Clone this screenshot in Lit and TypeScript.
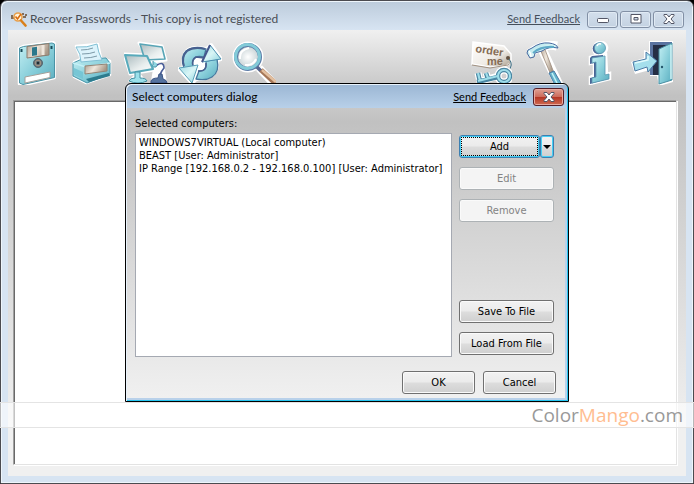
import { LitElement, html, css, svg } from "lit";
import { customElement } from "lit/decorators.js";

const logo = html`<svg class="logo" viewBox="0 0 16 16" aria-hidden="true">
  <path d="M0 5h2M11 3h2M14 4h2M0 7h3M12 6h3" stroke="#6b4a2c" stroke-width="1.5"/>
  <circle cx="7" cy="6" r="4" fill="#fff3dc" stroke="#e8a04c" stroke-width="1.600"/>
  <path d="M4.500 5.500l2 2.500 3.500-5" fill="none" stroke="#d86c10" stroke-width="1.600"/>
  <path d="M10 9.500l4.500 5" stroke="#d9801c" stroke-width="2.600" stroke-linecap="round"/>
</svg>`;

const icons = {
  save: svg`
    <path d="M3 7l4-2 30-4 1.500 1v35L8 44l-5-1z" fill="#fff" stroke="#fff" stroke-width="2.500" stroke-linejoin="round"/>
    <path d="M3.500 7l4-1.500L36 2l2.500 1v33.500L7 43.500l-3.500-1.500z" fill="url(#aqua)" stroke="#4a93a6" stroke-linejoin="round"/>
    <path d="M11 5.500L33 2.500V14L11 17z" fill="url(#tan)" stroke="#8d7c6e"/>
    <path d="M16 6.500l5-.7v8.500l-5 .7z" fill="#2b788c"/>
    <path d="M27 4v10" stroke="#efe6dc" stroke-width="3"/>
    <circle cx="22" cy="22" r="4.500" fill="#65727a" stroke="#55666e"/>
    <circle cx="22" cy="22" r="2.800" fill="none" stroke="#a89683"/>
    <circle cx="22" cy="22" r="1.200" fill="#1e2b30"/>
    <path d="M9 36l25-5v5.500L9 42z" fill="#fff" stroke="#a5a09a"/>
    <path d="M5.500 8v3M35.500 5v3" stroke="#174a58" stroke-width="2"/>`,
  print: svg`
    <path d="M6 5l22-2 3 14 9 3v14l-24 8-12-6V21l7-3z" fill="#fff" stroke="#fff" stroke-width="2.500" stroke-linejoin="round"/>
    <path d="M3 22l9-4 24-1 4 5v11L17 42 3 35z" fill="url(#aqua)" stroke="#4593a8" stroke-linejoin="round"/>
    <path d="M6 6q11 1 21-3 1 8 5 16l-21 2Q11 13 6 6z" fill="#dcf3fb" stroke="#7fbfd4"/>
    <path d="M11 9q7 0 12-2M12 13q8 0 13-2M14 17q7 0 13-2" fill="none" stroke="#7d9aa8"/>
    <path d="M3 22l13 4 24-4" fill="none" stroke="#c4f0f6" stroke-width="1.500"/>
    <path d="M15 25l22-2v7l-22 3z" fill="url(#tan)" stroke="#948475"/>
    <path d="M4 27l9 4v7l-9-4z" fill="#77c6d5"/>
    <path d="M16 38l23-6 1 3-21 6z" fill="#2d7c8e"/>`,
  computers: svg`
    <path d="M15 2l23 3 4 14-13 2-6-5zM0 13l24 1 6 15-24 4zM6 40h14l-6-8zM27 40h14l-2-15-9-3" fill="#fff" stroke="#fff" stroke-width="3" stroke-linejoin="round"/>
    <path d="M16 3l22 3 3 12-20 1z" fill="url(#screen)" stroke="#58a5b6" stroke-width="1.600" stroke-linejoin="round"/>
    <path d="M29 20v4l-3 2h6l2-3" fill="#8fd5e1" stroke="#4b93a5"/>
    <path d="M33 24q7-4 7 3-5 6-4 11" fill="none" stroke="#4b5f98" stroke-width="1.600"/>
    <path d="M27 40q1-3 7-3l1-4h3l1 5q4 1 4 4H27z" fill="#55739f" stroke="#3d5585"/>
    <path d="M1 14l22 1 6 13-23 4z" fill="url(#screen)" stroke="#58aabb" stroke-width="2" stroke-linejoin="round"/>
    <path d="M11 31h5v6q6 0 7 3-9 4-18 0 1-3 6-3z" fill="#9be0ea" stroke="#438fa2"/>`,
  refresh: svg`
    <g stroke-linejoin="round">
      <g fill="#fff" stroke="#fff" stroke-width="4">
        <path d="M6 27Q3 7 18 7l11 1L33 4l10 14-4 1q2 19-21 19l-4 4L1 28z"/>
      </g>
      <path d="M39 18q3 13-5 18-6 4-16 2l3-8q8 1 7-10z" fill="url(#aqua)" stroke="#47779d" stroke-width="1.300"/>
      <path d="M6 27Q2 16 8 10q7-5 20-2l-2 8q-8-2-10 2-2 3-1 8z" fill="url(#aqua)" stroke="#47779d" stroke-width="1.300"/>
      <path d="M6 25Q3 16 9 10q7-5 18-2" fill="none" stroke="#48608f" stroke-width="2"/>
      <path d="M15 25q-2-6 3-9l8 1" fill="none" stroke="#48608f" stroke-width="1.500"/>
      <path d="M20 30q9 1 8-8" fill="none" stroke="#48608f" stroke-width="1.500"/>
      <path d="M32 4l-8 17 19-3z" fill="url(#pale)" stroke="#4a8fb0"/>
      <path d="M32 4l-8 17" stroke="#45568c" stroke-width="2"/>
      <path d="M1 27l19-3-6 18z" fill="url(#pale)" stroke="#5a9fb8"/>
    </g>`,
  search: svg`
    <path d="M27 27l16 17" stroke="#fff" stroke-width="8"/>
    <circle cx="16" cy="16" r="15.500" fill="#fff"/>
    <circle cx="16" cy="16" r="12" fill="url(#glass)" stroke="#5b7aa6" stroke-width="4"/>
    <circle cx="15.500" cy="15.500" r="12" fill="none" stroke="#83cbd8" stroke-width="3"/>
    <path d="M8 18q-1-9 9-11M13 24q8 1 11-6" fill="none" stroke="#fff" stroke-width="2"/>
    <path d="M25 26l4 4" stroke="#55668f" stroke-width="3.500"/>
    <path d="M29 29l15 14" stroke="#a57758" stroke-width="5"/>
    <path d="M30 29l14 12" stroke="#e3c0a0" stroke-width="2.500"/>`,
  order: svg`
    <path d="M5 1l31 4 7 8v8l-5 4-16 1-18-3z" fill="url(#paper)" stroke="#fff" stroke-width="1.500"/>
    <path d="M4 24l18 3 18-3 3-4" fill="none" stroke="#a09080"/>
    <circle cx="40" cy="17" r="2" fill="#63503f"/>
    <text class="tag" x="7" y="11" transform="rotate(9 7 11)">order</text>
    <text class="tag" x="19" y="24">me</text>
    <path d="M41 18q5 6-1 12" fill="none" stroke="#3e7188"/>
    <g fill="none">
      <g stroke="#fff" stroke-width="7"><path d="M30 35l-20 6M10 32l2 9M18 32l2 6"/><circle cx="36" cy="35" r="6"/></g>
      <g stroke="#4a86a3" stroke-width="4.500"><path d="M30 36l-21 5M10 32l2 9M18 32l2 6"/><circle cx="36" cy="35" r="6"/></g>
      <g stroke="#9edde9" stroke-width="2.200"><path d="M30 35l-20 5M10 32l2 8M18 32l2 5"/><circle cx="36" cy="35" r="6"/></g>
    </g>`,
  tools: svg`
    <path d="M20 8l17 36M8 12q13-10 27-7" fill="none" stroke="#fff" stroke-width="9"/>
    <path d="M18 8l4-2 10 26-3 2z" fill="url(#tan)" stroke="#9a8878" stroke-width=".8"/>
    <path d="M27 32l5-2 8 14h-7z" fill="#64b4cc" stroke="#4a78a3"/>
    <path d="M30 32l6 12" stroke="#c5f1f6" stroke-width="1.500"/>
    <path d="M6 9l4-2Q18 1 27 2q8 1 9 5-9-2-16 3l-7 2-1 4-4 1-3-5z" fill="url(#pale)" stroke="#4869a0" stroke-linejoin="round"/>
    <path d="M11 12q8-7 21-6" fill="none" stroke="#5eaac8" stroke-width="2"/>
    <path d="M7 10q2 2 2 6" fill="none" stroke="#fff" stroke-width="1.500"/>`,
  info: svg`
    <path d="M24 1a6 6 0 0 1 2 12h4l1 20 3-1v6L14 43v-7l4-2V22l-4 1v-7l7-2a7 7 0 0 1 3-13z" fill="#fff" stroke="#fff" stroke-width="2.500"/>
    <circle cx="22.500" cy="7.500" r="5.800" fill="#4a6596"/>
    <circle cx="24" cy="7" r="5.500" fill="url(#aqua)" stroke="#5896b0" stroke-width=".8"/>
    <path d="M14 17l2-2 11-1v22l5-1v3L14 43v-6l4-1V22l-4 1z" fill="#4a6596"/>
    <path d="M16 17l13-2v19l4-1v5l-17 4v-5l4-1V21l-4 1z" fill="url(#aqua)" stroke="#5896b0" stroke-width=".8"/>
    <path d="M21 5q1-3 4-2" fill="none" stroke="#fff" stroke-width="1.500"/>`,
  exit: svg`
    <path d="M19 0h24v41l-14 4-2-10h-7v-6l-15 4-4-12 13-4V9l5 2z" fill="#fff"/>
    <path d="M20 1h22v33H20z" fill="#5a73a0"/>
    <path d="M23 4h17v30H23z" fill="#252e45"/>
    <path d="M29 8l13-6v37l-13 4z" fill="url(#aqua)" stroke="#4a8fa3"/>
    <path d="M41 4v34" stroke="#d3f5f7" stroke-width="1.500"/>
    <circle cx="32" cy="26" r="1.200" fill="#24586c"/>
    <path d="M3 21l13-3v-7l11 9-9 11-1-5-12 4z" fill="#a5dfec" stroke="#4b79a5" stroke-linejoin="round"/>
    <path d="M5 22l13-3v-4" fill="none" stroke="#e2fbfd" stroke-width="1.500"/>`,
};

const paints = html`<svg class="paints" aria-hidden="true"><defs>
  <linearGradient id="aqua" x2="1" y2="1"><stop stop-color="#c5f0f4"/><stop offset=".5" stop-color="#8bd0db"/><stop offset="1" stop-color="#58adbf"/></linearGradient>
  <linearGradient id="pale" x2="1" y2="1"><stop stop-color="#9edbe5"/><stop offset=".5" stop-color="#d9f5f6"/><stop offset="1" stop-color="#8fd4df"/></linearGradient>
  <linearGradient id="tan" x2="1" y2=".3"><stop stop-color="#b0a193"/><stop offset=".5" stop-color="#efe7dc"/><stop offset="1" stop-color="#a89888"/></linearGradient>
  <linearGradient id="screen" x2="1" y2="1"><stop stop-color="#a9b9bd"/><stop offset=".6" stop-color="#e8eeee"/><stop offset="1" stop-color="#fff"/></linearGradient>
  <linearGradient id="paper" x2="1" y2="1"><stop stop-color="#fff"/><stop offset=".6" stop-color="#efebe5"/><stop offset="1" stop-color="#a89c8c"/></linearGradient>
  <radialGradient id="glass"><stop stop-color="#fff"/><stop offset="1" stop-color="#c3cfd2"/></radialGradient>
</defs></svg>`;

const cross = html`<svg class="glyph" viewBox="0 0 12 10" aria-hidden="true">
  <path class="mark" d="M1 .5h3L6 3 8 .5h3v1L8 5l3 3.500v1H8L6 7 4 9.500H1v-1L4 5 1 1.500z"/>
</svg>`;

@customElement("app-root")
export class AppRoot extends LitElement {
  static styles = css`
    :host { display: block; background: #000; font: 11px/13px "DejaVu Sans Condensed", "DejaVu Sans", sans-serif; color: #000; }
    * { box-sizing: border-box; }
    button, select { font: inherit; color: inherit; }
    .paints { position: absolute; width: 0; height: 0; }
    .desk { position: relative; min-height: 100vh; display: flex; }
    .window {
      flex: 1; display: flex; flex-direction: column; padding: 0 7px 7px;
      border: 1px solid #4b4b50; border-radius: 7px 7px 0 0;
      background: linear-gradient(#bccbdb, #d7e4f2 29px); box-shadow: inset 1px 1px #eef5fb, inset -1px -1px #eef5fb;
    }
    .bar { display: flex; align-items: center; }
    .window > .bar { height: 29px; padding: 7px 2px 0 3px; }
    h1, h2 { flex: 1; margin: 0; font: 12px/16px Lato, "Open Sans", sans-serif; }
    h1 { color: #494e55; }
    .logo { width: 16px; height: 16px; margin-right: 3px; }
    a { color: inherit; font: 11px/14px Lato, "Open Sans", sans-serif; margin-right: 7px; }
    .window > .bar a { color: #454f5b; }
    .ctl { width: 31px; height: 17px; padding: 0; display: grid; place-items: center; border: 1px solid #8290a5; border-radius: 3px; background: linear-gradient(#d3dfec, #c4d2e2); box-shadow: inset 0 0 0 1px #e0eaf4; }
    .controls { display: flex; gap: 2px; }
    .glyph { width: 12px; height: 10px; display: block; }
    .mark { fill: #fff; stroke: #535666; stroke-width: 1; }
    .close { height: 18px; border-color: #56202a; background: linear-gradient(#dfa093, #cd6c5c 48%, #b53625 52%, #cf6b52); box-shadow: inset 0 0 0 1px #e8aaa0; }
    .content { flex: 1; display: flex; flex-direction: column; padding: 0 9px 11px 5px; background: linear-gradient(#f0f0f0, #c1c1c1 66px, #c5c5c5 100px, #f0f0f0 400px); }
    .toolbar { display: flex; justify-content: space-between; padding: 11px 3px 15px 3px; }
    .group { display: flex; gap: 10px; }
    .tool { padding: 0; border: 0; background: none; }
    .tool svg { display: block; width: 44px; height: 44px; }
    .tag { font: bold 11px "Liberation Sans", sans-serif; fill: #856c54; }
    .results { flex: 1; background: #fff; border: 1px solid; border-color: #9d9d9d #e3e3e3 #e3e3e3 #a0a0a0; box-shadow: inset 1px 1px #696969, 1px 1px #fff; }
    .watermark { position: absolute; left: 0; right: 0; bottom: 56px; height: 26px; padding: 0 11px; border: solid #e4e4e4; border-width: 1px 0; background: rgb(255 255 255 / 60%); text-align: right; font: 19px/24px "Open Sans", "Noto Sans", sans-serif; color: #999; }
    .mango { color: #ffbd91; }
    .dialog {
      position: absolute; top: 83px; left: 0; right: 0; margin: 0 auto; width: 444px; max-width: 100%;
      border: 1px solid #000; border-radius: 6px 6px 0 0;
      background: linear-gradient(#9bb6d3, #b9d1ea 25px); box-shadow: inset 1px 1px #e8f2fb, inset -1px -1px #25c5f0; padding: 1px 3px 3px 1px;
    }
    .dialog .bar { height: 23px; padding: 0 1px 0 5px; }
    .body { background: linear-gradient(#c8c8c8, #c1c1c1 14px, #c4c4c4 30px, #f0f0f0); padding: 9px 11px 4px 8px; }
    .label { display: block; margin-bottom: 3px; }
    .columns { display: flex; gap: 7px; }
    .list { flex: 1; min-width: 0; height: 224px; padding: 2px 1px; margin: 0; border: 1px solid #a5a9b2; border-radius: 0; background: #fff; overflow: hidden; outline: none; }
    .list option { padding: 0 2px; min-height: 13px; line-height: 13px; }
    .side { width: 95px; display: flex; flex-direction: column; gap: 9px; padding: 2px 0; }
    .btn { height: 23px; padding: 0; border: 1px solid #707070; border-radius: 3px; background: linear-gradient(#f2f2f2, #ebebeb 48%, #dddddd 52%, #cfcfcf); box-shadow: inset 0 0 0 1px #fafafa; }
    .btn:disabled { color: #838383; border-color: #adb2b5; background: #f4f4f4; }
    .split { display: flex; }
    .split .btn { border-color: #3c7fb1; box-shadow: inset 0 0 0 1px #45d0f5; }
    .add { flex: 1; position: relative; }
    .add::after { content: ""; position: absolute; inset: 1px; border: 1px dotted #000; }
    .more { width: 14px; display: grid; place-items: center; }
    .arrow { border: solid transparent; border-width: 4px 4px 0; border-top-color: #000; }
    .push { margin-top: auto; }
    .footer { display: flex; justify-content: flex-end; gap: 8px; padding-top: 14px; margin-right: -2px; }
    .footer .btn { width: 73px; }
  `;

  private tool(name: keyof typeof icons, label: string) {
    return html`<button class="tool" aria-label=${label}>
      <svg viewBox="0 0 44 44" aria-hidden="true">${icons[name]}</svg>
    </button>`;
  }

  render() {
    return html`<div class="desk">
      ${paints}
      <main class="window">
        <header class="bar">
          ${logo}
          <h1>Recover Passwords - This copy is not registered</h1>
          <a href="#">Send Feedback</a>
          <div class="controls">
            <button class="ctl" aria-label="Minimize"><svg class="glyph" viewBox="0 0 12 10"><rect class="mark" x=".5" y="4.500" width="11" height="4" rx="1"/></svg></button>
            <button class="ctl" aria-label="Maximize"><svg class="glyph" viewBox="0 0 12 10"><path class="mark" fill-rule="evenodd" d="M1 .5h10v8.500H1zM4 3.500v2.500h4V3.500z"/></svg></button>
            <button class="ctl" aria-label="Close">${cross}</button>
          </div>
        </header>
        <div class="content">
          <nav class="toolbar">
            <div class="group">
              ${this.tool("save", "Save")}${this.tool("print", "Print")}${this.tool("computers", "Select computers")}${this.tool("refresh", "Refresh")}${this.tool("search", "Search")}
            </div>
            <div class="group">
              ${this.tool("order", "Order")}${this.tool("tools", "Tools")}${this.tool("info", "About")}${this.tool("exit", "Exit")}
            </div>
          </nav>
          <section class="results" aria-label="Results"></section>
        </div>
      </main>
      <div class="watermark">Color<span class="mango">Mango</span>.com</div>
      <section class="dialog" role="dialog" aria-labelledby="title">
        <header class="bar">
          <h2 id="title">Select computers dialog</h2>
          <a href="#">Send Feedback</a>
          <button class="ctl close" aria-label="Close dialog">${cross}</button>
        </header>
        <div class="body">
          <label class="label" for="computers">Selected computers:</label>
          <div class="columns">
            <select class="list" id="computers" size="16">
              <option>WINDOWS7VIRTUAL (Local computer)</option>
              <option>BEAST [User: Administrator]</option>
              <option>IP Range [192.168.0.2 - 192.168.0.100] [User: Administrator]</option>
            </select>
            <div class="side">
              <div class="split">
                <button class="btn add">Add</button>
                <button class="btn more" aria-label="More ways to add"><span class="arrow"></span></button>
              </div>
              <button class="btn" disabled>Edit</button>
              <button class="btn" disabled>Remove</button>
              <button class="btn push">Save To File</button>
              <button class="btn">Load From File</button>
            </div>
          </div>
          <div class="footer">
            <button class="btn">OK</button>
            <button class="btn">Cancel</button>
          </div>
        </div>
      </section>
    </div>`;
  }
}
